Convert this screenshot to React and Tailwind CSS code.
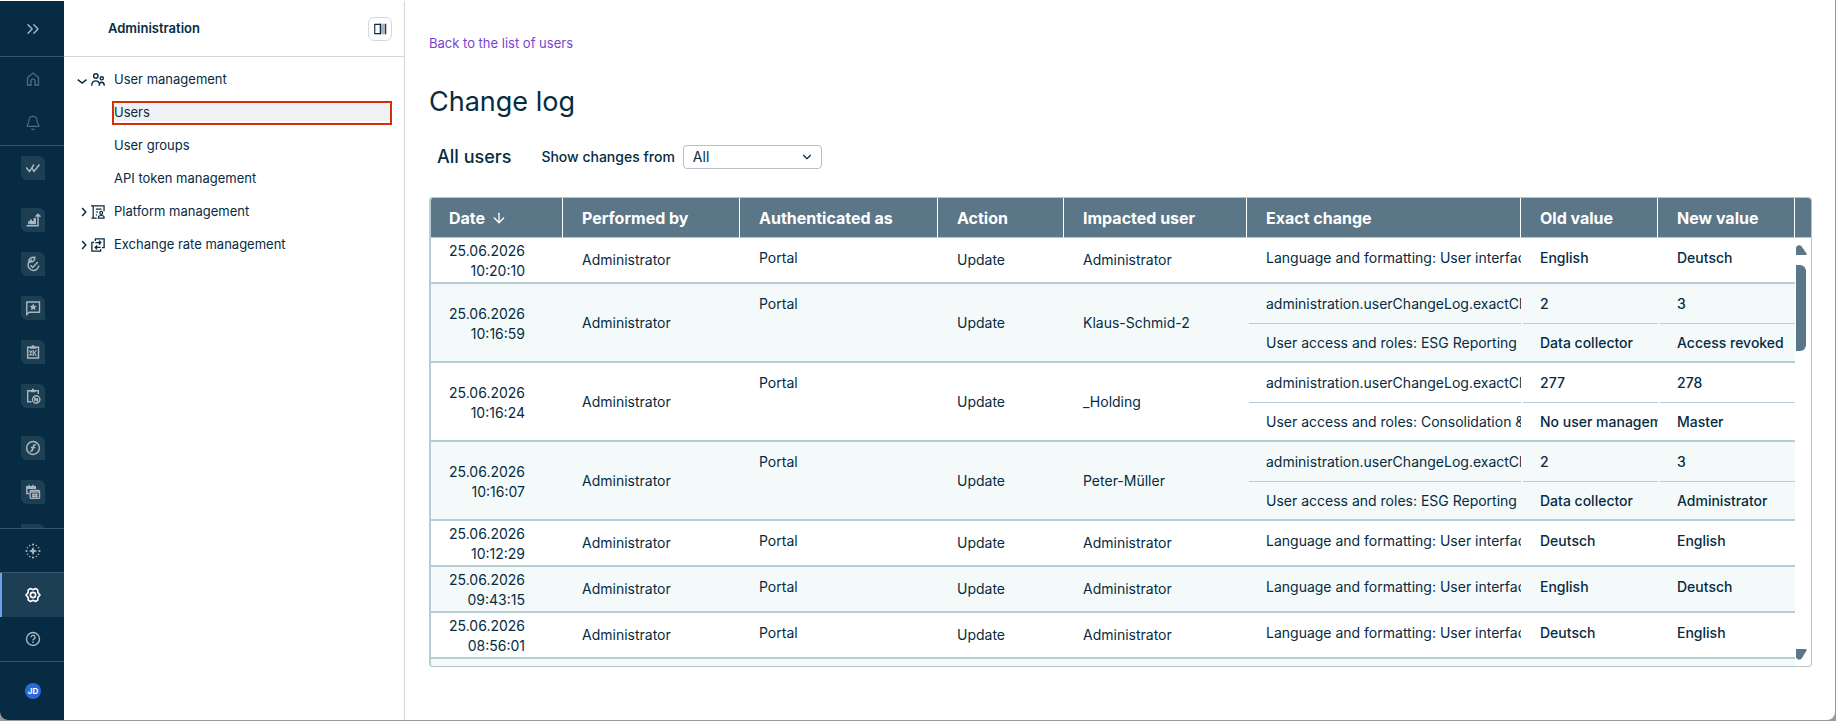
import { ArrowDown, Bell, ChevronDown, ChevronsRight } from "lucide-react";

/* ICONS */

const Svg = ({ size = 16, children, ...rest }) => (
  <svg
    width={size}
    height={size}
    viewBox="0 0 16 16"
    fill="none"
    stroke="currentColor"
    strokeWidth="1.3"
    aria-hidden="true"
    {...rest}
  >
    {children}
  </svg>
);

const HomeIcon = () => (
  <Svg>
    <path d="M2.5 14V6.6L8 2l5.5 4.6V14H10v-3.800a2 2 0 0 0-4 0V14z" />
  </Svg>
);

const DoubleCheckIcon = () => (
  <Svg strokeWidth="1.5">
    <path d="M1.2 7.500 4.500 11.500 9 4.500M7.300 8.700 9 11.500 14.500 4.500" />
  </Svg>
);

const ChartIcon = () => (
  <Svg strokeWidth="1.5">
    <path d="M1.500 13.800h11.500V3M10.500 4.800 13 2.300l2.500 2.500" />
    <path d="M3.200 12.300V9H5V7.500h2V9h1.500V6H11v6.300z" fill="currentColor" stroke="none" />
  </Svg>
);

const LeafCheckIcon = () => (
  <Svg strokeWidth="1.5">
    <path d="M3.800 6.200A5.400 5.400 0 1 0 13.800 9.500" />
    <path d="M5.500 9.200 7.700 11.500 12.800 6" />
    <path d="M4 6C3.500 3 5 1.300 9.800 1.300 9.800 4.500 8.500 6.500 4 6zM4 6.500l3-3" />
  </Svg>
);

const StarChatIcon = () => (
  <Svg strokeWidth="1.4">
    <path d="M1.800 14.500V2h12.700v10.300H4.200z" />
    <path
      d="m8.200 3.500 1.100 2.300 2.500.3-1.800 1.700.4 2.500-2.200-1.200L6 10.300l.4-2.500-1.800-1.700 2.500-.3z"
      fill="currentColor"
      stroke="none"
    />
  </Svg>
);

const ClipboardBarsIcon = () => (
  <Svg strokeWidth="1.5">
    <path d="M2.700 3.200h10.800v10.800H2.700z" />
    <path d="M5 3.700h6M8 1.200v1.500" strokeWidth="2.200" />
    <path d="M4.500 6.500 7 11.500M7 6.500 4.500 11.500M8.300 6v6M11.300 6 9.500 8.700l1.800 3.300" strokeWidth="1.200" />
  </Svg>
);

const ClipboardBlockIcon = () => (
  <Svg strokeWidth="1.4">
    <path d="M6.500 13.700H2.700V2.700h10.600v3.300" />
    <path d="M5.500 3.200h5M8 .8v1.800" strokeWidth="2" />
    <circle cx="11.200" cy="11.500" r="3.700" />
    <path d="M9.900 13.200v-3.200l2.600 3.200v-3.200" />
  </Svg>
);

const FunctionIcon = () => (
  <Svg strokeWidth="1.5">
    <circle cx="8" cy="8" r="6.400" />
    <path d="M10.800 4.800C8.800 4.300 8.500 5.500 8 8s-1 3.500-2.800 3.200M5.800 7.500h4.500" />
  </Svg>
);

const CalendarsIcon = () => (
  <Svg strokeWidth="1.4">
    <path d="M4 9.500H1.800V2.700h8.500V5M1.800 4.300h8.500M4 .8v2.200M8 .8v2.200" />
    <rect x="5.200" y="6.400" width="9.300" height="8" rx="1" />
    <path d="M5.200 8h9M7 10.500h5.800M7 12.500h5.800M8.300 9.500v4M11.300 9.500v4" />
  </Svg>
);

const SparkIcon = () => (
  <Svg fill="currentColor" stroke="none">
    <path d="M8 3.800 9.300 6.700 12.200 8 9.300 9.300 8 12.200 6.700 9.300 3.800 8 6.700 6.700z" />
    <circle cx="8" cy="1.500" r="1.100" />
    <circle cx="8" cy="14.500" r="1.100" />
    <circle cx="1.500" cy="8" r="1.100" />
    <circle cx="14.500" cy="8" r="1.100" />
    <circle cx="4.700" cy="2.500" r=".8" />
    <circle cx="11.300" cy="2.500" r=".8" />
    <circle cx="2.500" cy="4.700" r=".8" />
    <circle cx="13.500" cy="4.700" r=".8" />
    <circle cx="2.500" cy="11.300" r=".8" />
    <circle cx="13.500" cy="11.300" r=".8" />
    <circle cx="4.700" cy="13.500" r=".8" />
    <circle cx="11.300" cy="13.500" r=".8" />
  </Svg>
);

const GearIcon = () => (
  <Svg strokeWidth="1.6" strokeLinejoin="round">
    <path d="M5.500 1.500 8 2.700l2.500-1.200 2.200 1.400.2 2.700L15 8l-2.100 2.400-.2 2.700-2.200 1.400L8 13.300l-2.500 1.200-2.200-1.400-.2-2.700L1 8l2.100-2.400.2-2.700z" />
    <circle cx="8" cy="8" r="2.600" />
  </Svg>
);

const HelpIcon = () => (
  <Svg strokeWidth="1.4">
    <circle cx="8" cy="8" r="6.500" />
    <path d="M6 6.400a2 2 0 1 1 2.900 1.700c-.7.400-.9.700-.9 1.400M8 10.600v1.400" />
  </Svg>
);

const UsersIcon = () => (
  <Svg size={14} strokeWidth="1.6" className="mx-px">
    <circle cx="5.500" cy="3.400" r="2.500" />
    <path d="M.8 14.500c.2-3.500 1.800-5.500 4.700-5.500 1.800 0 3 .8 3.800 2.300" />
    <circle cx="12.300" cy="6" r="1.800" />
    <path d="M9.300 14.500c0-2.700.9-4 2.900-4s2.900 1.400 3 4" />
  </Svg>
);

const PlatformIcon = () => (
  <Svg size={14} strokeWidth="1.4" className="mx-px">
    <path d="M2.500 1v14M0 1h15.700M14.900 1v6M.5 15h6M5.500 4.800h6.500M5.500 8h2.500M5.500 11.200h1.500" />
    <circle cx="11.700" cy="9" r="1.600" />
    <path d="M8.500 15v-1.300c0-1.200 1.200-1.700 3.200-1.700s3.200.5 3.200 1.700V15z" />
  </Svg>
);

const ExchangeIcon = () => (
  <Svg size={14} strokeWidth="1.5" className="mx-px">
    <path d="M5 3.500V1h10v10h-2.500M11 12.500V15H1V5h2.500" />
    <path d="M5 5.200h6M9 3l2.200 2.200L9 7.400M11 10.800H5M7 8.600l-2.200 2.200L7 13" />
  </Svg>
);

const PanelIcon = () => (
  <Svg size={14} strokeWidth="1.3">
    <path d="M2 2.700h6.500v10.600H2z" />
    <path d="M9 2h5.500v12H9z" fill="#aab4bd" stroke="none" />
    <path d="M8.500 2v12M14.500 2v12" />
  </Svg>
);

const TreeChevron = ({ open }) => (
  <Svg size={14} strokeWidth="1.7" className="shrink-0">
    <path d={open ? "M2 7.500l5 4 5-4" : "M7 3.500l4.200 4.500L7 12.500"} />
  </Svg>
);

/* DATA */

const appGroups = [
  [{ label: "Tasks", icon: DoubleCheckIcon }],
  [
    { label: "Reporting", icon: ChartIcon },
    { label: "ESG", icon: LeafCheckIcon },
    { label: "Ratings", icon: StarChatIcon },
    { label: "Planning", icon: ClipboardBarsIcon },
    { label: "Controls", icon: ClipboardBlockIcon },
  ],
  [
    { label: "Formulas", icon: FunctionIcon },
    { label: "Calendars", icon: CalendarsIcon },
    { label: "More", icon: null },
  ],
];

const columns = [
  { title: "Date", width: "w-[132px] pl-[18px]" },
  { title: "Performed by", width: "w-[177px] pl-[19px]" },
  { title: "Authenticated as", width: "w-[198px] pl-[19px]" },
  { title: "Action", width: "w-[126px] pl-[19px]" },
  { title: "Impacted user", width: "w-[183px] pl-[19px]" },
  { title: "Exact change", width: "w-auto pl-[19px]" },
  { title: "Old value", width: "w-[137px] pl-[19px]" },
  { title: "New value", width: "w-[137px] pl-[19px]" },
];

const languageChange = "Language and formatting: User interface";
const accessKey = "administration.userChangeLog.exactChange";

const rows = [
  { time: "10:20:10", user: "Administrator", changes: [[languageChange, "English", "Deutsch"]] },
  {
    time: "10:16:59",
    user: "Klaus-Schmid-2",
    changes: [
      [accessKey, "2", "3"],
      ["User access and roles: ESG Reporting", "Data collector", "Access revoked"],
    ],
  },
  {
    time: "10:16:24",
    user: "_Holding",
    changes: [
      [accessKey, "277", "278"],
      ["User access and roles: Consolidation &", "No user management", "Master"],
    ],
  },
  {
    time: "10:16:07",
    user: "Peter-Müller",
    changes: [
      [accessKey, "2", "3"],
      ["User access and roles: ESG Reporting", "Data collector", "Administrator"],
    ],
  },
  { time: "10:12:29", user: "Administrator", changes: [[languageChange, "Deutsch", "English"]] },
  { time: "09:43:15", user: "Administrator", changes: [[languageChange, "English", "Deutsch"]] },
  { time: "08:56:01", user: "Administrator", changes: [[languageChange, "Deutsch", "English"]] },
  { time: "08:55:12", user: "Administrator", changes: [[languageChange, "English", "Deutsch"]] },
];

/* RAIL */

const Rail = () => (
  <nav
    aria-label="Applications"
    className="flex w-16 shrink-0 flex-col bg-[#062b42] text-[#a9b6be]"
  >
    <button
      aria-label="Expand menu"
      className="flex h-14 shrink-0 items-center justify-center border-b border-[#38566a] pl-px"
    >
      <ChevronsRight size={20} strokeWidth={1.75} />
    </button>

    <div className="flex shrink-0 flex-col border-b border-[#38566a] text-[#526d7d]">
      <a href="#home" aria-label="Home" className="flex h-11 items-center justify-center pl-0.5">
        <HomeIcon />
      </a>
      <a
        href="#notifications"
        aria-label="Notifications"
        className="flex h-11 items-center justify-center pl-0.5"
      >
        <Bell size={16} strokeWidth={1.75} />
      </a>
    </div>

    <div className="flex min-h-0 flex-1 flex-col items-center gap-7 overflow-hidden pt-2.5 pl-0.5">
      {appGroups.map((group) => (
        <div key={group[0].label} className="flex flex-col gap-5">
          {group.map(({ label, icon: Icon }) => (
            <a
              key={label}
              href="#app"
              aria-label={label}
              className="flex size-6 shrink-0 items-center justify-center rounded-tr-md rounded-bl-md bg-[#1d3f53]"
            >
              {Icon && <Icon />}
            </a>
          ))}
        </div>
      ))}
    </div>

    <div className="flex shrink-0 flex-col border-t border-[#38566a]">
      <a
        href="#assistant"
        aria-label="Assistant"
        className="flex h-11 items-center justify-center border-b border-[#38566a] pl-0.5"
      >
        <SparkIcon />
      </a>
      <a
        href="#administration"
        aria-label="Administration"
        className="flex h-11 items-center justify-center border-l-2 border-[#6ea0f5] bg-[#1d3f53] text-white"
      >
        <GearIcon />
      </a>
      <a href="#help" aria-label="Help" className="flex h-11 items-center justify-center pl-0.5">
        <HelpIcon />
      </a>
    </div>

    <div className="flex h-[59px] shrink-0 items-center justify-center border-t border-[#38566a] pl-0.5">
      <button className="flex size-4 items-center justify-center rounded-full bg-[#2b68d8] text-[8px] font-bold text-white">
        JD
      </button>
    </div>
  </nav>
);

/* SIDEBAR */

const TreeItem = ({ icon: Icon, open, children }) => (
  <a href="#section" className="flex h-[33px] items-center pl-3">
    <TreeChevron open={open} />
    <Icon />
    <span className="ml-2">{children}</span>
  </a>
);

const Sidebar = () => (
  <aside className="flex w-[341px] shrink-0 flex-col border-r border-[#d3d8e0] text-[13px]">
    <div className="flex h-14 items-center justify-between border-b border-[#d3d8e0] pr-3 pl-11">
      <h2 className="font-semibold">Administration</h2>
      <button
        aria-label="Toggle panel"
        className="flex size-6 items-center justify-center rounded-md border border-[#d3d8e0]"
      >
        <PanelIcon />
      </button>
    </div>

    <nav aria-label="Administration" className="flex flex-col pt-1.5 pr-3">
      <TreeItem icon={UsersIcon} open>
        User management
      </TreeItem>
      <a href="#users" className="mt-[5px] mb-1 ml-12 h-6 border-2 border-[#d32f0a]">
        <span className="block h-[18px] rounded bg-[#f0f1f4] leading-[18px]">Users</span>
      </a>
      <a href="#groups" className="flex h-[33px] items-center pl-[50px]">
        User groups
      </a>
      <a href="#tokens" className="flex h-[33px] items-center pl-[50px]">
        API token management
      </a>
      <TreeItem icon={PlatformIcon}>Platform management</TreeItem>
      <TreeItem icon={ExchangeIcon}>Exchange rate management</TreeItem>
    </nav>
  </aside>
);

/* TABLE */

const ChangeCell = ({ row, index, className }) => (
  <td className={`overflow-hidden pl-0.5 align-top whitespace-nowrap ${className}`}>
    {row.changes.map((change, i) => (
      <div
        key={i}
        className={`overflow-hidden pl-[17px] ${i === 0 ? "pt-2.5" : "pt-[9px]"} ${
          row.changes.length > 1 && i === 0 ? "h-10 border-b border-[#b3ced5]" : ""
        }`}
      >
        {change[index]}
      </div>
    ))}
  </td>
);

const LogTable = () => (
  <div className="relative min-h-0 flex-1 overflow-hidden rounded border border-l-2 border-[#bcc2cb] border-l-[#b3ced5]">
    <table className="w-full table-fixed border-separate border-spacing-0 text-sm">
      <thead>
        <tr className="h-10 text-left text-base text-white">
          {columns.map((col) => (
            <th
              key={col.title}
              className={`border-r border-b border-r-white border-b-[#bcc2cb] bg-[#5b7686] pt-px font-bold ${col.width}`}
            >
              <span className="flex items-center gap-1.5 leading-5">
                {col.title}
                {col.title === "Date" && <ArrowDown size={16} strokeWidth={2} />}
              </span>
            </th>
          ))}
          <th className="w-4 border-b border-[#bcc2cb] bg-[#5b7686]" />
        </tr>
      </thead>

      <tbody className="leading-5 [&_td]:border-b-2 [&_td]:border-[#b3ced5] [&>tr:nth-child(even)>td]:bg-[#f4fafa]">
        {rows.map((row) => (
          <tr key={row.time} className={row.changes.length > 1 ? "h-[79px]" : "h-[46px]"}>
            <td className="pt-0.5 pr-[38px] pl-[18px] text-right">
              25.06.2026 {row.time}
            </td>
            <td className="pl-[19px]">Administrator</td>
            <td className="pt-2.5 pl-[19px] align-top">Portal</td>
            <td className="pl-[19px]">Update</td>
            <td className="pl-[19px]">{row.user}</td>
            <ChangeCell row={row} index={0} className="" />
            <ChangeCell row={row} index={1} className="font-medium" />
            <ChangeCell row={row} index={2} className="font-medium" />
          </tr>
        ))}
      </tbody>
    </table>

    {/* SCROLLBAR */}

    <div className="absolute top-10 right-0 bottom-0 flex w-[15px] flex-col text-[#5b7686]">
      <svg width="11" height="10" className="mt-[7px]" fill="currentColor" aria-hidden="true">
        <path d="M0 2.500C1.500-.2 4.500-.5 6 2L10.500 8.500Q11 10 9.500 10H0z" />
      </svg>
      <div className="mt-2.5 h-[86px] w-2.5 rounded-r-md bg-[#5b7686]" />
      <svg width="11" height="11" className="mt-auto mb-1.5" fill="currentColor" aria-hidden="true">
        <path d="M0 0H9.500Q11 .3 10.500 1.500L6 9C4.500 11.500 1.500 11 0 8.500z" />
      </svg>
    </div>
  </div>
);

const App = () => {
  return (
    <div className="h-screen bg-[#999] pr-px pb-px font-['Inter',sans-serif] text-[#062b42]">
      <div className="flex h-full overflow-hidden rounded-b-lg border-t border-white bg-white">
        <Rail />
        <Sidebar />

        <main className="flex min-w-0 flex-1 flex-col pt-[30px] pr-[23px] pb-[53px] pl-6">
          <a href="#back" className="self-start text-[13px] leading-6 text-[#7b3fd0]">
            Back to the list of users
          </a>

          <h1 className="mt-[29px] text-[27px] leading-9">Change log</h1>

          <div className="mt-[25px] mb-7 flex items-center pl-2">
            <h2 className="text-lg leading-6 font-medium">All users</h2>
            <label htmlFor="range" className="ml-[30px] text-sm font-medium">
              Show changes from
            </label>
            <div className="relative ml-2">
              <select
                id="range"
                className="block h-6 w-[139px] appearance-none rounded border border-[#b8bec8] bg-white pl-[9px] text-sm leading-5"
              >
                <option>All</option>
              </select>
              <ChevronDown size={14} className="pointer-events-none absolute top-[5px] right-2" />
            </div>
          </div>

          <LogTable />
        </main>
      </div>
    </div>
  );
};

export default App;
